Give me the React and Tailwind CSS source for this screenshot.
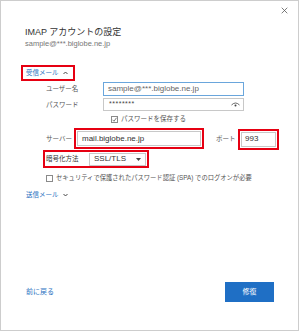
import React from "react";

const RedBox = ({ className = "", children }) => (
  <div className={`border-2 border-[#e60012] ${className}`}>{children}</div>
);

const Check = ({ checked }) => (
  <span className="w-[7px] h-[7px] border border-[#8a8a8a] bg-white flex items-center justify-center shrink-0">
    {checked && (
      <svg width="5" height="5" viewBox="0 0 10 10">
        <path d="M1 5.5 L4 8.5 L9 1.5" fill="none" stroke="#444" strokeWidth="1.4" />
      </svg>
    )}
  </span>
);

const App = () => {
  return (
    <div className="w-[300px] h-[332px] bg-white font-['Liberation_Sans','Noto_Sans_CJK_JP',sans-serif]">
      <div className="relative w-[299px] h-[331px] border border-[#cdcdcd] flex flex-col">
        {/* 閉じる */}
        <svg className="absolute right-[10px] top-[6px]" width="7" height="7" viewBox="0 0 10 10">
          <path d="M1 1 L9 9 M9 1 L1 9" stroke="#555" strokeWidth="1.1" />
        </svg>

        {/* ヘッダー */}
        <div className="ml-[24px] mt-[26px] text-[9px] leading-[10px] text-[#333]">
          IMAP アカウントの設定
        </div>
        <div className="ml-[24px] mt-[2px] text-[7.5px] leading-[10px] text-[#777]">
          sample@***.biglobe.ne.jp
        </div>

        {/* 受信メール */}
        <RedBox className="ml-[20px] mt-[16px] w-fit h-[16px] flex items-center gap-[4px] pl-[3px] pr-[5px]">
          <span className="text-[6.5px] text-[#2b72c2]">受信メール</span>
          <svg width="5" height="4" viewBox="0 0 10 6">
            <path d="M1 5 L5 1 L9 5" fill="none" stroke="#333" strokeWidth="1.8" />
          </svg>
        </RedBox>

        {/* ユーザー名 */}
        <div className="flex items-center h-[14px] mt-[1px]">
          <span className="ml-[45px] w-[57px] text-[6.5px] text-[#555]">ユーザー名</span>
          <div className="w-[141px] h-[14px] border border-[#6aa6dc] px-[4px] flex items-center text-[8px] text-[#666]">
            sample@***.biglobe.ne.jp
          </div>
        </div>

        {/* パスワード */}
        <div className="flex items-center h-[13px] mt-[2px]">
          <span className="ml-[45px] w-[57px] text-[6.5px] text-[#555]">パスワード</span>
          <div className="w-[141px] h-[13px] border border-[#c8c8c8] pl-[5px] pr-[3px] flex items-center justify-between text-[7px] text-[#444]">
            <span className="tracking-[0.5px]">********</span>
            <svg width="9" height="5" viewBox="0 0 18 10">
              <path d="M1 6 Q9 -2 17 6" fill="none" stroke="#444" strokeWidth="1.6" />
              <circle cx="9" cy="7" r="2" fill="#444" />
            </svg>
          </div>
        </div>

        {/* パスワードを保存する */}
        <div className="flex items-center gap-[3px] h-[10px] mt-[3px] ml-[110px]">
          <Check checked />
          <span className="text-[6.5px] text-[#555]">パスワードを保存する</span>
        </div>

        {/* サーバー / ポート */}
        <div className="flex items-center mt-[4px] h-[21px]">
          <span className="ml-[45px] w-[28px] text-[6.5px] text-[#555]">サーバー</span>
          <RedBox className="w-[130px] h-[21px] p-[1px]">
            <div className="h-full border border-[#c8c8c8] px-[4px] flex items-center text-[8px] text-[#333]">
              mail.biglobe.ne.jp
            </div>
          </RedBox>
          <span className="ml-[12px] w-[22px] text-[6.5px] text-[#555]">ポート</span>
          <RedBox className="w-[41px] h-[21px] p-[1px] mt-[1px]">
            <div className="h-full border border-[#c8c8c8] px-[3px] flex items-center text-[8px] text-[#333]">
              993
            </div>
          </RedBox>
        </div>

        {/* 暗号化方法 */}
        <RedBox className="ml-[42px] mt-[1px] w-[106px] h-[18px] flex items-center pl-[1px]">
          <span className="w-[43px] text-[6.5px] text-[#333]">暗号化方法</span>
          <div className="w-[57px] h-[13px] border border-[#c8c8c8] pl-[4px] pr-[4px] flex items-center justify-between text-[8px] text-[#333]">
            <span>SSL/TLS</span>
            <svg width="5" height="3" viewBox="0 0 10 6">
              <path d="M0 0 L10 0 L5 6 Z" fill="#444" />
            </svg>
          </div>
        </RedBox>

        {/* SPA */}
        <div className="flex items-center gap-[3px] h-[10px] mt-[5px] ml-[45px]">
          <Check />
          <span className="text-[6.3px] text-[#555] whitespace-nowrap">
            セキュリティで保護されたパスワード認証 (SPA) でのログオンが必要
          </span>
        </div>

        {/* 送信メール */}
        <div className="flex items-center gap-[4px] h-[10px] mt-[7px] ml-[25px]">
          <span className="text-[6.5px] text-[#2b72c2]">送信メール</span>
          <svg width="5" height="4" viewBox="0 0 10 6">
            <path d="M1 1 L5 5 L9 1" fill="none" stroke="#333" strokeWidth="1.8" />
          </svg>
        </div>

        {/* フッター */}
        <div className="mt-auto mb-[28px] flex items-center justify-between">
          <span className="ml-[25px] text-[7px] text-[#2b72c2]">前に戻る</span>
          <button className="mr-[24px] w-[49px] h-[20px] bg-[#1f6fc5] text-white text-[7px] flex items-center justify-center">
            修復
          </button>
        </div>
      </div>
    </div>
  );
};

export default App;
